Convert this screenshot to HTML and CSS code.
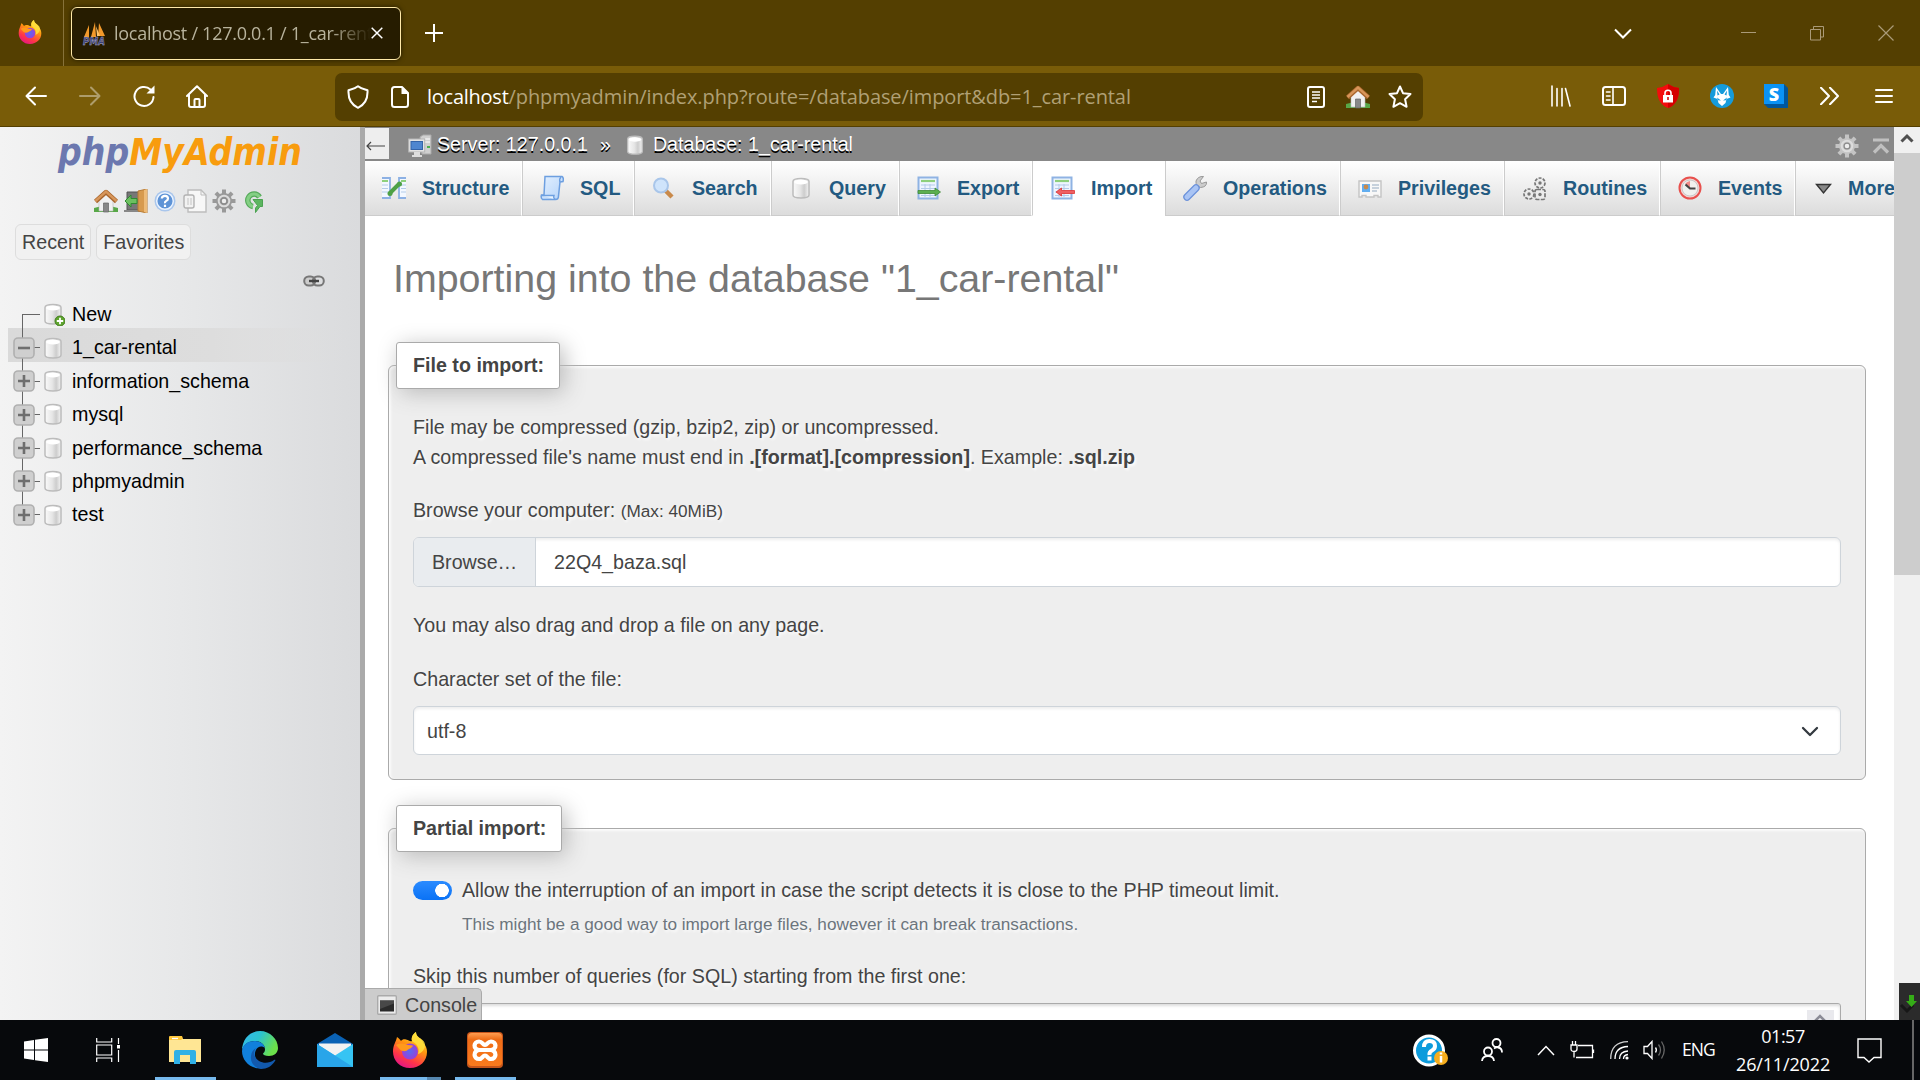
FILE: index.html
```html
<!DOCTYPE html>
<html lang="en">
<head>
<meta charset="utf-8">
<title>localhost / 127.0.0.1 / 1_car-rental | phpMyAdmin</title>
<link rel="stylesheet" href="styles.css">
</head>
<body>
<svg width="0" height="0" class="defs">
  <defs>
    <linearGradient id="gCyl" x1="0" x2="1"><stop offset="0" stop-color="#fafafa"/><stop offset=".45" stop-color="#e6e6e6"/><stop offset=".7" stop-color="#cdcdcd"/><stop offset="1" stop-color="#f4f4f4"/></linearGradient>
    <linearGradient id="gFlame" x1=".8" y1="0" x2=".3" y2="1"><stop offset="0" stop-color="#fff44f"/><stop offset=".4" stop-color="#ff980e"/><stop offset=".75" stop-color="#ff3647"/><stop offset="1" stop-color="#e31587"/></linearGradient>
    <radialGradient id="gGlobe"><stop offset="0" stop-color="#5a6bf0"/><stop offset="1" stop-color="#9a3fd8"/></radialGradient>
    <linearGradient id="gEdge1" x1="0" x2="1" y2=".4"><stop offset="0" stop-color="#35b8f0"/><stop offset=".5" stop-color="#2cc4cf"/><stop offset="1" stop-color="#6be04b"/></linearGradient>
    <linearGradient id="gBlue" x1="0" y1="0" x2="1" y2="1"><stop offset="0" stop-color="#e3f0ff"/><stop offset="1" stop-color="#b4d3fa"/></linearGradient>
    <linearGradient id="gOrange" y2="1" x2="0"><stop offset="0" stop-color="#ff9d50"/><stop offset=".2" stop-color="#ef6d17"/><stop offset="1" stop-color="#f97a1d"/></linearGradient>
    <symbol id="db" viewBox="0 0 24 24"><path d="M4 5.500C4 1.500 20 1.500 20 5.500V19c0 4-16 4-16 0z" fill="url(#gCyl)" stroke="#bcbcbc" stroke-width="1.500"/><ellipse cx="12" cy="6" rx="6.800" ry="2.500" fill="#fff"/></symbol>
    <symbol id="house" viewBox="0 0 24 24"><path d="M0 19q12-4 24 0v4H0z" fill="#58a848"/><path d="M5 11l7-7 7 7v11H5z" fill="#f1f1f1" stroke="#bbb" stroke-width=".6"/><path d="M1.500 12.500L12 3l10.500 9.500" fill="none" stroke="#a9662d" stroke-width="4.500" stroke-linejoin="round"/><path d="M1.500 12L12 2.500 22.500 12" fill="none" stroke="#d7965a" stroke-width="2.400"/><path d="M9.500 14h5v9h-5z" fill="#888" stroke="#666" stroke-width=".7"/></symbol>
    <symbol id="gear" viewBox="0 0 24 24"><g stroke-width="4" stroke="currentColor"><path d="M12 0.500v23M.500 12h23M3.900 3.900l16.200 16.200M20.100 3.900L3.900 20.100"/></g><circle cx="12" cy="12" r="8" fill="currentColor"/><circle cx="12" cy="12" r="5.300" fill="none" stroke="#dcdcdc" stroke-width="2"/><circle cx="12" cy="12" r="2.900" fill="#ededed" stroke="#8a8a8a" stroke-width="1.200"/></symbol>
    <symbol id="sheet" viewBox="0 0 24 24"><path d="M1.500 1.500h19v21h-19z" fill="#eef5ff" stroke="#8fb3e3" stroke-width="2"/><path d="M4 5h14" stroke="#8ed07c" stroke-width="2.200"/><path d="M4 9h14M4 12.500h14M4 16h14M4 19.500h14M8 8v13M13 8v13" stroke="#b4cbe9" stroke-width="1"/></symbol>
    <symbol id="fox" viewBox="0 0 36 36"><path d="M18 36C8 36 1 28.500 1 19.500 1 13 4 10 5 5c2 1 3 3 4 4 1-1.500 3-2 5-1.500C17 8 18 10 20 9c-1-4 1-7 4-9 0 4 3 5 5 7 1 1.500 2 2 2 4 3 2 4 6 4 9 0 9-7 16-17 16z" fill="url(#gFlame)"/><path d="M24 0c-3 2-5 5-4 9 5 3 8 7 6 13 4-1 7-5 7-9 0-3-2-5-4-6s-5-3-5-7z" fill="#ffe03c" opacity=".85"/><circle cx="18" cy="19.500" r="8" fill="url(#gGlobe)"/><path d="M4 13c5-3 9-1 12 0l5 .500c-1 3-4 3-6 5-2 1-5 1-7-1z" fill="#ff9a1c"/></symbol>
    <symbol id="plus" viewBox="0 0 22 22"><rect x="1" y="1" width="20" height="20" rx="4" fill="#cfcfcf" stroke="#b0b0b0" stroke-width="1.600"/><path d="M5 11h12M11 5v12" stroke="#6e6e6e" stroke-width="2.600"/></symbol>
    <symbol id="minus" viewBox="0 0 22 22"><rect x="1" y="1" width="20" height="20" rx="4" fill="#cfcfcf" stroke="#b0b0b0" stroke-width="1.600"/><path d="M5 11h12" stroke="#6e6e6e" stroke-width="2.600"/></symbol>
  </defs>
</svg>

<header class="tabstrip">
  <div class="pinned"><svg width="24" height="24"><use href="#fox"/></svg></div>
  <div class="tab">
    <svg class="fav" width="25" height="25" viewBox="0 0 25 25"><path d="M2 16L7 4v12zM9 16L13 1l1 15zM16 15L17 2l6 13z" fill="#f39a2b"/><path d="M14 5l4 10h-3z" fill="#ffc46b"/><text x="1" y="24" class="pma" textLength="22" lengthAdjust="spacingAndGlyphs">PMA</text></svg>
    <span class="tab-title">localhost / 127.0.0.1 / 1_car-rent</span>
    <svg class="tab-x" width="12" height="12" viewBox="0 0 12 12"><path d="M.7.7l10.600 10.600M11.300.7L.7 11.300" stroke="#fff" stroke-width="1.500"/></svg>
  </div>
  <svg class="newtab" width="18" height="18" viewBox="0 0 18 18"><path d="M9 0v18M0 9h18" stroke="#fff" stroke-width="2"/></svg>
  <div class="winbtns">
    <svg width="18" height="11" viewBox="0 0 18 11"><path d="M1 1.500l8 8 8-8" fill="none" stroke="#fff" stroke-width="2"/></svg>
    <svg class="w-min" width="15" height="2"><path d="M0 .5h15" stroke="#aa9a78" stroke-width="1"/></svg>
    <svg class="w-max" width="14" height="15" viewBox="0 0 14 15"><path d="M.5 3.500h10v10.500H.5zM3.500 3V.5h10v10.500H11" fill="none" stroke="#aa9a78"/></svg>
    <svg class="w-close" width="16" height="16" viewBox="0 0 16 16"><path d="M.5.5l15 15M15.500.5l-15 15" stroke="#aa9a78" stroke-width="1.200"/></svg>
  </div>
</header>

<nav class="toolbar">
  <div class="navbtns">
    <svg width="22" height="22" viewBox="0 0 22 22"><path d="M21 11H2M10 2.500L1.500 11l8.500 8.500" class="ln"/></svg>
    <svg class="dim" width="22" height="22" viewBox="0 0 22 22"><path d="M1 11h19M12 2.500l8.500 8.500-8.500 8.500" class="ln"/></svg>
    <svg width="22" height="22" viewBox="0 0 22 22"><path d="M20.500 12a9.500 9.500 0 1 1-3-7.500" class="ln"/><path d="M21.500.5v8h-8z" fill="#fff"/></svg>
    <svg class="n-home" width="22" height="23" viewBox="0 0 22 23"><path d="M1 11L11 1.200 21 11M3 9.500V20q0 2 2 2h12q2 0 2-2V9.500M8.500 22v-7q0-1 1-1h3q1 0 1 1v7" class="ln"/></svg>
  </div>
  <div class="urlbar">
    <svg width="22" height="24" viewBox="0 0 22 24"><path d="M11 1.200c3 2.500 6 3 9.500 4C21 14 18 19.500 11 22.800 4 19.500 1 14 1.500 5.200c3.500-1 6.500-1.500 9.500-4z" class="ln"/></svg>
    <svg class="u-page" width="18" height="22" viewBox="0 0 18 22"><path d="M1 3.500Q1 1 3.500 1H11l6 6v11.500q0 2.500-2.500 2.500h-11Q1 21 1 18.500z" class="ln"/><path d="M10.500 1v7H18z" fill="#fff"/></svg>
    <span class="url"><b>localhost</b>/phpmyadmin/index.php?route=/database/import&amp;db=1_car-rental</span>
    <svg width="18" height="22" viewBox="0 0 18 22"><rect x="1" y="1" width="16" height="20" rx="2" class="ln"/><path d="M5 6h8M5 9h8M5 12h8M5 15.500h5" stroke="#fff" stroke-width="1.500"/></svg>
    <svg class="u-house" width="24" height="24"><use href="#house"/></svg>
    <svg class="u-star" width="24" height="24" viewBox="0 0 24 24"><path d="M12 1.500l3 6.700 7.500.8-5.400 5.200 1.500 7.600L12 18.200l-6.600 3.600 1.500-7.600L1.500 9l7.500-.8z" class="ln"/></svg>
  </div>
  <div class="exts">
    <svg width="20" height="22" viewBox="0 0 20 22"><path d="M1 1v20M6 3.500v17.500M11 3.500v17.500M14.500 3.500l4.500 17.500" class="ln thin"/></svg>
    <svg class="e1" width="24" height="20" viewBox="0 0 24 20"><rect x="1" y="1" width="22" height="18" rx="2.500" class="ln"/><path d="M11 1v18M4.500 6h3.500M4.500 10h3.500M4.500 14h3.500" class="ln thin"/></svg>
    <svg class="e2" width="22" height="24" viewBox="0 0 22 24"><path d="M11 0q5 3.500 11 4c.3 10-3 17-11 20C3 21 0 14 0 4q6-.5 11-4z" fill="#f30d0d"/><path d="M11 0q5 3.500 11 4c.3 10-3 17-11 20z" fill="#d40000"/><path d="M6 11h10v7.500H6z" fill="#fff"/><path d="M8 11V9q0-2.800 3-2.800T14 9v2" fill="none" stroke="#fff" stroke-width="1.600"/><path d="M11 13v3" stroke="#c00" stroke-width="1.500"/></svg>
    <svg class="e3" width="24" height="24" viewBox="0 0 24 24"><circle cx="12" cy="12" r="12" fill="#159bdb"/><path d="M6 3l5 7h2l5-7 .8 8 1.700 2.500-4 1.500-1 4L12 22l-3.500-3-1-4-4-1.500L5.200 11z" fill="#fff"/><path d="M7 13.500l4 3-3-.2zM17 13.500l-4 3 3-.2zM7 6.500l2.500 4-2 1zM17 6.500l-2.500 4 2 1z" fill="#159bdb"/></svg>
    <svg class="e4" width="24" height="24" viewBox="0 0 24 24"><path d="M20 0l4 4v20H4l-4-4z" fill="#00569c"/><path d="M0 0h20v20H0z" fill="#0a93f5"/><text x="10" y="16.500" text-anchor="middle" class="s-logo">S</text></svg>
    <svg class="e5" width="19" height="18" viewBox="0 0 19 18"><path d="M1 .7L9 9l-8 8.300M10 .7L18 9l-8 8.300" class="ln"/></svg>
    <svg class="e6" width="18" height="16" viewBox="0 0 18 16"><path d="M1 2h16M1 8h16M1 14h16" class="ln"/></svg>
  </div>
</nav>

<div class="page">
  <aside class="side">
    <svg class="logo" width="250" height="48" viewBox="0 0 250 48"><text x="1" y="35" textLength="244" lengthAdjust="spacingAndGlyphs"><tspan fill="#6c78af">php</tspan><tspan fill="#f89c0e">MyAdmin</tspan></text></svg>
    <div class="quick">
      <svg width="24" height="24"><use href="#house"/></svg>
      <svg width="24" height="24" viewBox="0 0 24 24"><path d="M3 3h13v18H3z" fill="#777" stroke="#555"/><path d="M0 21h16v2H0z" fill="#888"/><path d="M14 2l9-2v24l-9-2z" fill="#d79a4e" stroke="#b67a34"/><path d="M20 1l3-1v24l-3-1z" fill="#edbb79"/><path d="M1 12l6-6v3.500h6v5H7V18z" fill="#6cc060" stroke="#2f8a32"/></svg>
      <svg width="24" height="24" viewBox="0 0 24 24"><circle cx="12" cy="12" r="10.500" fill="#a9c6ec"/><circle cx="12" cy="12" r="8.300" fill="#5e93d6" stroke="#eaf3ff" stroke-width="1.500"/><path d="M8.800 9.500Q9 6.800 12 6.800t3 2.700q0 1.500-1.700 2.400T12 14.300M12 15.800v2.200" fill="none" stroke="#fff" stroke-width="2.200"/></svg>
      <svg width="24" height="24" viewBox="0 0 24 24"><path d="M5 1h13l5 5v17H5z" fill="#f7f7f7" stroke="#bdbdbd" stroke-width="1.400"/><path d="M18 1v5h5" fill="none" stroke="#bdbdbd"/><rect x="1" y="6" width="10" height="13" rx="2" fill="#f2f2f2" stroke="#b2b2b2" stroke-width="1.400"/><path d="M5 9v7M8 9v7" stroke="#c4c4c4"/></svg>
      <svg class="gear1" width="24" height="24"><use href="#gear"/></svg>
      <svg width="24" height="24" viewBox="0 0 24 24"><path d="M17.500 8A6.300 6.300 0 1 0 11 17.500" fill="none" stroke="#55a95a" stroke-width="5.500"/><path d="M17.500 8A6.300 6.300 0 1 0 11 17.500" fill="none" stroke="#84cf84" stroke-width="3.200"/><path d="M11 10.500h9.500v7H18L13.500 23.500V19l2-2.500z" fill="#5cb560" stroke="#4ba351"/></svg>
    </div>
    <div class="rf"><span>Recent</span><span>Favorites</span></div>
    <div class="linkrow"><svg width="22" height="12" viewBox="0 0 22 12"><rect x="1.200" y="1.500" width="11" height="9" rx="4.500" fill="#ccc" stroke="#777" stroke-width="2"/><rect x="9.800" y="1.500" width="11" height="9" rx="4.500" fill="none" stroke="#777" stroke-width="2"/><path d="M6 6h10" stroke="#444" stroke-width="2.400"/></svg></div>
    <ul class="tree">
      <li class="new"><i></i><svg width="24" height="24"><use href="#db"/><circle cx="19" cy="19" r="5" fill="#5fa52f" stroke="#417d1c"/><path d="M15.800 19h6.400M19 15.800v6.400" stroke="#fff" stroke-width="1.800"/></svg><span>New</span></li>
      <li class="on"><i><svg width="22" height="22"><use href="#minus"/></svg></i><svg width="24" height="24"><use href="#db"/></svg><span>1_car-rental</span></li>
      <li><i><svg width="22" height="22"><use href="#plus"/></svg></i><svg width="24" height="24"><use href="#db"/></svg><span>information_schema</span></li>
      <li><i><svg width="22" height="22"><use href="#plus"/></svg></i><svg width="24" height="24"><use href="#db"/></svg><span>mysql</span></li>
      <li><i><svg width="22" height="22"><use href="#plus"/></svg></i><svg width="24" height="24"><use href="#db"/></svg><span>performance_schema</span></li>
      <li><i><svg width="22" height="22"><use href="#plus"/></svg></i><svg width="24" height="24"><use href="#db"/></svg><span>phpmyadmin</span></li>
      <li class="last"><i><svg width="22" height="22"><use href="#plus"/></svg></i><svg width="24" height="24"><use href="#db"/></svg><span>test</span></li>
    </ul>
  </aside>

  <main class="main">
    <div class="crumbs">
      <span class="collapse"><svg width="20" height="10" viewBox="0 0 20 10"><path d="M19 5H1M5 1L1 5l4 4" fill="none" stroke="#444" stroke-width="1.200"/></svg></span>
      <svg class="c-srv" width="24" height="24" viewBox="0 0 24 24"><path d="M12 3l3-2h8v19h-9z" fill="#d0d0d0" stroke="#aaa"/><path d="M17 5h5M17 8h5" stroke="#fff"/><path d="M19 12h3v2h-3z" fill="#4caf50"/><rect x=".7" y="5" width="16" height="13" fill="#e4e4e4" stroke="#b5b5b5"/><rect x="3" y="7.500" width="11.500" height="8" fill="#4f86cf" stroke="#3564a8"/><path d="M6 18h6v3h2v2H4v-2h2z" fill="#ddd"/></svg>
      <span>Server: 127.0.0.1</span><span class="sep">»</span>
      <svg class="c-db" width="22" height="24"><use href="#db"/></svg>
      <span class="c-name">Database: 1_car-rental</span>
      <svg class="c-gear" width="24" height="24"><use href="#gear"/></svg>
      <svg class="c-top" width="18" height="17" viewBox="0 0 18 17"><path d="M1 2h16M2 14.500L9 7.500l7 7" fill="none" stroke="#c0c0c0" stroke-width="3.200"/></svg>
    </div>
    <div class="tabs">
      <a class="t1"><svg width="24" height="24" viewBox="0 0 24 24"><path d="M0 2h9v20H0zM16 2h8v20h-8z" fill="#f3f8ff"/><path d="M0 2h8v20H0M24 2h-7v20h7" fill="none" stroke="#8db1e4" stroke-width="1.800"/><path d="M0 5h6M19 5h5" stroke="#8ed07c" stroke-width="2"/><path d="M0 9h6M0 12.500h6M0 16h6M19 9h5M19 12.500h5M19 16h5" stroke="#b4cbe9" stroke-width="1.200"/><path d="M8 17l9-9" stroke="#4ea146" stroke-width="4"/><circle cx="8" cy="17.500" r="2.500" fill="#4ea146"/><circle cx="17.500" cy="8" r="2.500" fill="#4ea146"/></svg>Structure</a>
      <a class="t2"><svg width="24" height="26" viewBox="0 0 24 26"><path d="M5 1.500h17q2 1 1 5l-3 .500-1.500 14q0 3.500-3 3.500H2.500q-2-1.500-1-4.500H4z" fill="url(#gBlue)" stroke="#6d9fe0" stroke-width="1.500"/><path d="M20 7q-1-3 1-5M1.500 20.500H14q-1 3 1.500 3.800" fill="#eaf4ff" stroke="#6d9fe0" stroke-width="1.400"/></svg>SQL</a>
      <a class="t3"><svg width="24" height="24" viewBox="0 0 24 24"><path d="M13 14l7 7" stroke="#c98a4b" stroke-width="4.500"/><circle cx="9" cy="9.500" r="7" fill="#cfe4fb" stroke="#a9c6ea" stroke-width="2"/></svg>Search</a>
      <a class="t4"><svg width="24" height="24"><use href="#db"/></svg>Query</a>
      <a class="t5"><svg width="24" height="24" viewBox="0 0 24 24"><use href="#sheet"/><path d="M1 14.500h17v-2.500l5.500 4-5.500 4v-2.500H1z" fill="#5caf51" stroke="#3f8a36" stroke-width=".8"/></svg>Export</a>
      <a class="t6 cur"><svg width="24" height="24" viewBox="0 0 24 24"><use href="#sheet"/><path d="M23.500 14.500h-13v-2.500L5 16l5.500 4v-2.500h13z" fill="#ef5f62" stroke="#d33" stroke-width=".8"/></svg>Import</a>
      <a class="t7"><svg width="24" height="26" viewBox="0 0 24 26"><path d="M13 13l5-5" stroke="#a8a8a8" stroke-width="4.500"/><path d="M20.500 1.500L17 6l1.500 2.500 5-1.500q.5 5-6 5.500-5-1-4.500-6.500Q15 1 20.500 1.500z" fill="#ccc" stroke="#999" stroke-width="1"/><path d="M4 22l9-9" stroke="#6c92da" stroke-width="7.500" stroke-linecap="round"/><path d="M4 22l9-9" stroke="#a9c4f4" stroke-width="5" stroke-linecap="round"/></svg>Operations</a>
      <a class="t8"><svg width="24" height="24" viewBox="0 0 24 24"><path d="M1 5h22v16h-3v-1.500h-4V21H8v-1.500H4V21H1z" fill="#f8f8f8" stroke="#c4c4c4" stroke-width="1.400"/><path d="M4 8h8v8H4z" fill="#62aef0"/><circle cx="8" cy="11" r="2.400" fill="#c98a4b"/><path d="M14 9h7M14 12h7M14 15h5" stroke="#b5c3d2" stroke-width="1.400"/></svg>Privileges</a>
      <a class="t9"><svg width="25" height="25" viewBox="0 0 25 25"><g fill="#ececec" stroke="#777" stroke-width="1.700"><circle cx="18" cy="7" r="5" stroke-dasharray="3 1.300"/><circle cx="7" cy="18" r="5" stroke-dasharray="3 1.300"/><rect x="13" y="13.500" width="10" height="10" rx="2" stroke-dasharray="4 1.300"/></g><g fill="#777"><circle cx="18" cy="7" r="1.700"/><circle cx="7" cy="18" r="1.700"/><circle cx="18" cy="18.500" r="1.700"/></g></svg>Routines</a>
      <a class="t10"><svg width="24" height="24" viewBox="0 0 24 24"><circle cx="12" cy="12" r="10.500" fill="#f2d5d2" stroke="#e8504d" stroke-width="2"/><circle cx="12" cy="12" r="8" fill="#f1f1ee" stroke="#c9c9c9"/><path d="M12 12V5A7 7 0 0 0 7 8z" fill="#f28b87"/><path d="M7.500 8.500L12 12.500h5.500" fill="none" stroke="#444" stroke-width="2.200"/></svg>Events</a>
      <a class="t11"><svg width="20" height="24" viewBox="0 0 20 24"><path d="M3.500 8.500h14L10.500 17z" fill="#888" stroke="#333" stroke-width="1.400"/></svg>More</a>
    </div>

    <div class="content">
      <h2>Importing into the database "1_car-rental"</h2>
      <section class="panel p-file">
        <div class="legend">File to import:</div>
        <p>File may be compressed (gzip, bzip2, zip) or uncompressed.<br>A compressed file's name must end in <b>.[format].[compression]</b>. Example: <b>.sql.zip</b></p>
        <p class="lbl">Browse your computer: <small>(Max: 40MiB)</small></p>
        <div class="file"><span class="btn">Browse…</span><span class="fname">22Q4_baza.sql</span></div>
        <p class="drag">You may also drag and drop a file on any page.</p>
        <p class="cs">Character set of the file:</p>
        <div class="select"><span>utf-8</span><svg width="18" height="12" viewBox="0 0 18 12"><path d="M2 2l7 7 7-7" fill="none" stroke="#343a40" stroke-width="2.300" stroke-linecap="round" stroke-linejoin="round"/></svg></div>
      </section>
      <section class="panel p-part">
        <div class="legend">Partial import:</div>
        <div class="allow"><span class="switch"></span><span class="allow-t">Allow the interruption of an import in case the script detects it is close to the PHP timeout limit.</span></div>
        <p class="help">This might be a good way to import large files, however it can break transactions.</p>
        <p class="skip">Skip this number of queries (for SQL) starting from the first one:</p>
        <div class="num"><span><svg width="14" height="9" viewBox="0 0 14 9"><path d="M2 7l5-5 5 5" fill="none" stroke="#8b8b96" stroke-width="2.500"/></svg></span></div>
      </section>
    </div>
    <div class="console"><svg width="20" height="20" viewBox="0 0 20 20"><rect x=".7" y=".7" width="18.600" height="18.600" rx="1" fill="#ececec" stroke="#aaa" stroke-width="1.400"/><path d="M3 5.500h14v11H3z" fill="#2a2a2a"/><path d="M3 5.500h14v3L3 14z" fill="#484848"/></svg><span>Console</span></div>
  </main>

  <div class="scroll">
    <div class="up"><svg width="14" height="10" viewBox="0 0 14 10"><path d="M1.500 8.500L7 3l5.500 5.500" fill="none" stroke="#505050" stroke-width="3"/></svg></div>
    <div class="thumb"></div>
    <div class="dl"><svg width="21" height="37" viewBox="0 0 21 37"><path d="M2 22l6 6 6-6" fill="none" stroke="#171717" stroke-width="3"/><path d="M10 12h5v6h3l-5.500 6L7 18h3z" fill="#35ad17"/></svg></div>
  </div>
</div>

<footer class="taskbar">
  <div class="apps">
    <span class="app a-win"><svg width="24" height="24" viewBox="0 0 24 24"><path d="M0 3.500l10-1.500v9.500H0zM11 1.800L24 0v11.500H11zM0 12.500h10V22L0 20.500zM11 12.500h13V24l-13-1.800z" fill="#fff"/></svg></span>
    <span class="app a-view"><svg width="24" height="24" viewBox="0 0 24 24"><path d="M.7 0v4h15V0M.7 7h15v10h-15zM.7 24v-4h15v4M22.500 0v6M22.500 12v12" fill="none" stroke="#fff" stroke-width="1.200"/><path d="M21 7h3v3.500h-3z" fill="#fff"/></svg></span>
    <span class="app open"><svg width="32" height="28" viewBox="0 0 32 28"><path d="M0 1h12l2 2H32v23H0z" fill="#ffe694"/><path d="M0 1q0-1 1-1h12l1 2.500L12 4H0z" fill="#ffc83c"/><path d="M3 2.500h6" stroke="#fff" stroke-width="1.300"/><path d="M5 28V16q0-2 2-2h18q2 0 2 2v12h-6v-9H11v9z" fill="#31b1e6"/></svg></span>
    <span class="app"><svg width="36" height="38" viewBox="0 0 36 38"><path d="M0 20C0 8 8 0 18 0s18 8 18 17c0 5-4 8-9 8-4 0-6-1-6-2.500 1-1 2-2 2-4C23 13 18 10 13 10 6 10 1 14 0 20z" fill="url(#gEdge1)"/><path d="M0 20C1 13 6 10 13 10c5 0 9 3 10 7-2-2-5-2-7-.500-5 4-4 13 4 18l1 2.500C9 39 0 30 0 20z" fill="#1180dc"/><path d="M14 17c-3 4-2 10 3 13 5 3 11 2 15-1 1-.500 2 0 1 1-3 5-8 8-14 8-6-1-11-6-10-13 .500-4 2-6 5-8z" fill="#1259ad"/></svg></span>
    <span class="app"><svg width="36" height="34" viewBox="0 0 36 34"><path d="M0 11L18 0l18 11v5H0z" fill="#0a62b5"/><path d="M2 10.500h32V24H2z" fill="#f2f2f2"/><path d="M0 11l18 11.500L36 11v23H0z" fill="#36c4f3"/><path d="M0 11l36 23H0z" fill="#29a5e9"/></svg></span>
    <span class="app open ff"><svg width="36" height="36"><use href="#fox"/></svg></span>
    <span class="app open"><svg width="36" height="38" viewBox="0 0 36 36"><rect width="36" height="36" rx="4" fill="#c6551a"/><rect x="1" y="1" width="34" height="33" rx="4" fill="url(#gOrange)"/><path d="M13 18h10M12.500 18c-7-1-6-8.500-.5-8.500 3.500 0 3.500 3.500 6 3.500s2.500-3.500 6-3.500c5.500 0 6.500 7.500-.5 8.500 7 1 6 9 .5 9-3.500 0-3.500-3.500-6-3.500s-2.500 3.500-6 3.500c-5.500 0-6.500-8 .5-9z" fill="none" stroke="#fff" stroke-width="4.200" stroke-linejoin="round"/></svg></span>
  </div>
  <div class="tray">
    <svg class="y0" width="36" height="33" viewBox="0 0 36 33"><circle cx="16" cy="16.500" r="14.500" fill="#0c9bdc" stroke="#fff" stroke-width="3"/><path d="M11 13q0-6 5.500-6t5.500 5q0 3-3 4.500t-2.500 4.500M16.500 22.500v4" fill="none" stroke="#fff" stroke-width="4"/><circle cx="28" cy="24" r="7" fill="#f5ad1e"/><path d="M28 22v6.500M28 18.500v2" stroke="#fff" stroke-width="2.500"/></svg>
    <svg class="y1" width="22" height="24" viewBox="0 0 22 24"><g fill="none" stroke="#fff" stroke-width="1.800"><circle cx="15.500" cy="5" r="4"/><circle cx="7" cy="13.500" r="4"/><path d="M1 23q.500-5 6-5t6 5M13 10.500q2-1.500 4-1 4 .5 4 5"/></g></svg>
    <svg class="y2" width="18" height="11" viewBox="0 0 18 11"><path d="M1 10l8-8.500 8 8.500" fill="none" stroke="#fff" stroke-width="1.500"/></svg>
    <svg class="y3" width="25" height="18" viewBox="0 0 25 18"><path d="M8 4.500h14.500V16.500H6M23.500 8.500v3.500M1 4h6v4q0 2.500-3 2.500T1 8zM2.500 4V0M5.500 4V0M4 10.500v6" fill="none" stroke="#fff" stroke-width="1.300"/></svg>
    <svg class="y4" width="19" height="19" viewBox="0 0 19 19"><g fill="none" stroke="#fff" stroke-width="1.300"><path d="M.700 18Q.700 1 18 .700" opacity=".8"/><path d="M5 18Q5 6 18 5.500M9.500 18q0-7.500 8.500-8M13.500 18q0-4 4.500-4.500"/></g><circle cx="17" cy="17" r="1.600" fill="#fff"/></svg>
    <svg class="y5" width="23" height="20" viewBox="0 0 23 20"><path d="M1 6.500h3.500L9 1.500v17l-4.500-5H1z" fill="none" stroke="#fff" stroke-width="1.300"/><path d="M12.500 7.500q1.800 2.500 0 5" stroke="#fff" stroke-width="1.300" fill="none"/><path d="M15.500 4.500q4 5.500 0 11M18.500 1.500q5.500 8.500 0 17" stroke="#666" stroke-width="1.300" fill="none"/></svg>
    <span class="lang">ENG</span>
    <div class="clock"><span class="time">01:57</span><span class="date">26/11/2022</span></div>
    <svg class="y6" width="25" height="25" viewBox="0 0 25 25"><path d="M1 1h23v18.500h-7L12 24l-5-4.500H1z" fill="none" stroke="#fff" stroke-width="1.400"/></svg>
  </div>
</footer>
</body>
</html>
```
FILE: styles.css
```css
* { box-sizing: border-box; }
html, body { margin: 0; height: 100%; overflow: hidden; }
body { width: 1920px; height: 1080px; display: flex; flex-direction: column; font: 19.68px/29.52px "Liberation Sans", Arial, sans-serif; color: #444; background: #fff; }
.defs { position: absolute; }
svg { display: block; flex: none; }
p, h2, ul { margin: 0; padding: 0; }

/* browser chrome */
.tabstrip { height: 66px; flex: none; display: flex; align-items: center; background: #543f01; font-family: "Open Sans", sans-serif; }
.pinned { width: 64px; height: 66px; padding: 20px 0 0 18px; border-right: 1px solid #87723a; }
.tab { width: 330px; height: 53px; margin-left: 7px; padding-left: 10px; display: flex; align-items: center; background: #261c00; border: 1px solid #ffe9a8; border-radius: 6px; box-shadow: 0 0 5px rgba(0,0,0,.6); }
.fav, .logo, .e4 { overflow: visible; }
.pma { font: italic 700 10px/10px "DejaVu Sans", sans-serif; fill: #3a3f78; stroke: #b9bbdb; stroke-width: .4px; }
.tab-title { width: 257px; margin: 1px 0 0 7px; white-space: nowrap; font-size: 18px; letter-spacing: -.27px; color: #b8b39c; -webkit-mask-image: linear-gradient(90deg, #000 84%, transparent); mask-image: linear-gradient(90deg, #000 84%, transparent); }
.newtab { margin-left: 24px; }
.winbtns { margin-left: auto; padding-right: 26px; display: flex; align-items: center; }
.w-min { margin-left: 109px; }
.w-max { margin-left: 54px; }
.w-close { margin-left: 54px; }
.toolbar { height: 61px; flex: none; display: flex; align-items: center; background: #795c08; border-bottom: 1px solid #543f01; }
.ln { fill: none; stroke: #fff; stroke-width: 2; stroke-linecap: round; stroke-linejoin: round; }
.thin { stroke-width: 1.6; }
.navbtns { display: flex; gap: 32px; padding-left: 25px; align-items: center; }
.n-home { margin-left: -1px; }
.dim { opacity: .4; }
.urlbar { width: 1088px; height: 48px; margin: 1px 0 0 127px; padding: 0 11px 0 12px; display: flex; align-items: center; background: #543f01; border-radius: 7px; }
.u-page { margin-left: 22px; }
.url { flex: 1; margin: 1px 0 0 18px; font: 20px/30px "Open Sans", sans-serif; letter-spacing: -.09px; color: #b0a075; white-space: nowrap; }
.url b { font-weight: 400; color: #fff; letter-spacing: -.25px; }
.u-house { margin-left: 21px; }
.u-star { margin-left: 18px; }
.exts { display: flex; align-items: center; margin-left: 128px; }
.e1 { margin-left: 31px; }
.e2 { margin-left: 31px; }
.e3 { margin-left: 31px; }
.e4 { margin-left: 30px; }
.e5 { margin-left: 32px; }
.e6 { margin-left: 36px; }
.s-logo { font: 800 18px "Open Sans", sans-serif; fill: #fff; }

/* page */
.page { flex: 1; min-height: 0; display: flex; }
.side { width: 365px; flex: none; border-right: 5px solid #aaa; background: linear-gradient(90deg, #f3f3f3, #e7e8e9 50%, #dadbdd); }
.logo { margin: 3px 0 0 57px; }
.logo text { font: italic 700 37px "DejaVu Sans", sans-serif; }
.quick { display: flex; gap: 5.600px; margin: 11px 0 0 94px; }
.gear1 { color: #999; }
.rf { display: flex; gap: 5px; margin: 11px 0 0 15px; }
.rf span { height: 36px; padding: 0 6px; line-height: 34px; background: #f1f1f1; border: 1px solid #ddd; border-radius: 6px; }
.linkrow { height: 35px; padding: 15px 0 0 303px; }
.tree { list-style: none; margin-left: 8px; color: #000; }
.tree li { height: 33.400px; display: flex; align-items: center; width: 342px; }
.tree li > svg { margin: 5px 0 0 1px; }
.tree li span { margin: 6px 0 0 7px; }
.tree i { width: 32px; height: 33.400px; padding: 8.500px 0 0 5px; background: linear-gradient(#666, #666) 14px 0 / 1px 100% no-repeat, linear-gradient(#666, #666) 14px 19px / 20px 1px no-repeat; }
.tree .new i { background: linear-gradient(#666, #666) 14px 19px / 1px 100% no-repeat, linear-gradient(#666, #666) 14px 19px / 21px 1px no-repeat; }
.tree .last i { background: linear-gradient(#666, #666) 14px 0 / 1px 10px no-repeat, linear-gradient(#666, #666) 14px 19px / 20px 1px no-repeat; }
.tree .on { background: linear-gradient(90deg, #dadada, #ddd 60%, rgba(220,221,223,0)); }

.main { flex: 1; min-width: 0; overflow: hidden; position: relative; }
.crumbs { height: 34px; display: flex; align-items: center; background: #888; color: #fff; text-shadow: 0 1.500px 0 #000; line-height: 29px; }
.crumbs > span { margin-top: 1px; }
.crumbs > .collapse { width: 24px; height: 31px; padding: 13px 0 0 1px; align-self: flex-start; margin-top: 1px; background: #eee; }
.c-srv { margin: 4px 5px 0 19px; }
.crumbs > .sep { margin-left: 12px; }
.c-db { margin: 2px 0 0 13px; }
.crumbs > .c-name { margin-left: 7px; }
.c-gear { margin: 4px 0 0 auto; color: #c4c4c4; }
.c-top { margin: 4px 4px 0 13px; }
.tabs { display: flex; height: 55px; font-weight: 700; color: #235a81; }
.tabs a { flex: none; display: flex; align-items: center; padding: 2px 0 0 17px; border-right: 1px solid #fff; border-left: 1px solid #ccc; border-bottom: 1px solid #ccc; background: linear-gradient(#fff, #dcdcdc); }
.tabs a svg { margin: -2px 16px 0 0; }
.tabs .t1 { width: 157px; border-left: 0; }
.tabs .t11 svg { margin-right: 15px; }
.t2 { width: 112px; } .t3 { width: 137px; } .t4 { width: 128px; } .t5 { width: 133px; } .t6 { width: 133px; }
.t7 { width: 175px; } .t8 { width: 164px; } .t9 { width: 156px; } .t10 { width: 135px; } .t11 { width: 120px; }
.tabs .t6 { padding-left: 18px; }
.tabs .cur { background: #fff; border-bottom-color: #fff; }
.content { padding: 0 28px 0 23px; }
h2 { margin-left: 5px; padding-top: 34px; font: 400 39.360px/57px "Liberation Sans", Arial, sans-serif; color: #777; }
.panel { display: flex; flex-direction: column; border: 1px solid #aaa; border-radius: 6px; background: #eee; padding: 0 24px; text-shadow: 1.500px 1.500px 3px #fff; box-shadow: inset 1.500px 1.500px 3px #fff; }
.p-file { margin-top: 58px; height: 415px; }
.p-part { margin-top: 48px; height: 300px; }
.legend { align-self: flex-start; height: 47px; margin: -24px 0 0 -17px; padding: 0 15px 0 16px; line-height: 45px; font-weight: 700; background: #fff; border: 1px solid #aaa; border-radius: 3px; box-shadow: 4px 4px 22px #bbb; text-shadow: none; }
.panel p { margin-top: 23px; line-height: 30px; white-space: nowrap; }
small { font-size: 17.200px; }
.file { height: 50px; margin-top: 11px; display: flex; border: 1px solid #ced4da; border-radius: 6px; background: #fff; overflow: hidden; line-height: 48px; box-shadow: inset 0 2px 3px rgba(0,0,0,.07); text-shadow: none; }
.btn { width: 122px; padding-left: 18px; background: #e9ecef; border-right: 1px solid #ced4da; }
.fname { padding-left: 18px; }
.panel .drag { margin-top: 23px; }
.panel .cs { margin-top: 24px; }
.select { height: 49px; margin-top: 12px; display: flex; align-items: center; justify-content: space-between; padding: 2px 21px 0 13px; border: 1px solid #ced4da; border-radius: 6px; background: #fff; box-shadow: inset 0 2px 3px rgba(0,0,0,.07); text-shadow: none; }
.allow { display: flex; align-items: center; gap: 10px; margin-top: 23px; white-space: nowrap; }
.allow-t { padding-top: 1px; }
.switch { width: 39px; height: 19px; border-radius: 10px; background: radial-gradient(circle 7px at 29px 50%, #fff 6.500px, transparent 7px), linear-gradient(#2b8bff, #0a72f5); }
.panel .help { margin: 3px 0 0 49px; font-size: 17.200px; color: #6c757d; }
.panel .skip { margin-top: 22px; }
.num { height: 60px; margin-top: 12px; border: 1px solid #aaa; border-radius: 3px; background: #fff; box-shadow: inset 0 2px 3px #ddd; display: flex; justify-content: flex-end; padding: 6px 6px 0 0; }
.num span { width: 27px; height: 40px; background: #e9e9ed; padding: 4px 0 0 6px; }
.console { position: absolute; left: 0; bottom: 0; width: 117px; height: 32px; padding-left: 12px; display: flex; align-items: center; gap: 8px; background: #ccc; border: 1px solid #aaa; border-left: 0; border-bottom: 0; border-radius: 0 5px 0 0; }
.console span { padding-top: 2px; }
.scroll { width: 26px; flex: none; display: flex; flex-direction: column; background: #f0f0f0; }
.up { height: 26px; padding: 6px 0 0 6px; }
.thumb { height: 422px; background: #cdcdcd; }
.dl { width: 21px; height: 37px; margin: auto 0 0 5px; background: #2b2b2b; }

/* taskbar */
.taskbar { height: 60px; flex: none; display: flex; justify-content: space-between; background: #07090c; color: #fff; font-family: "Open Sans", sans-serif; }
.apps { display: flex; padding-left: 5px; gap: 14px; }
.app { width: 61px; height: 60px; display: flex; align-items: center; justify-content: center; border-bottom: 3px solid transparent; padding: 3px 1px 0 0; }
.a-win { padding: 3px 0 0 1px; }
.a-view { margin-left: -3px; margin-right: 3px; padding: 3px 0 0; }
.open { border-bottom-color: #76b9ed; }
.ff { background: linear-gradient(90deg, #76b9ed 47px, #5687b0 47px) 0 57px / 100% 3px no-repeat border-box; border-bottom-color: transparent; background-origin: border-box; }
.tray { display: flex; align-items: center; width: 507px; white-space: nowrap; background: linear-gradient(#666, #666) 499px 0 / 2px 100% no-repeat; }
.y1 { margin-left: 32px; } .y2 { margin-left: 34px; } .y3 { margin-left: 15px; } .y4 { margin-left: 15px; } .y5 { margin-left: 14px; }
.lang { width: 34px; margin-left: 16px; font-size: 17.5px; letter-spacing: -.9px; }
.clock { width: 94px; margin-left: 20px; display: flex; flex-direction: column; align-items: center; font-size: 18px; line-height: 28px; }
.time { letter-spacing: -.5px; }
.date { letter-spacing: -.15px; }
.y6 { margin-left: 27px; }
```
